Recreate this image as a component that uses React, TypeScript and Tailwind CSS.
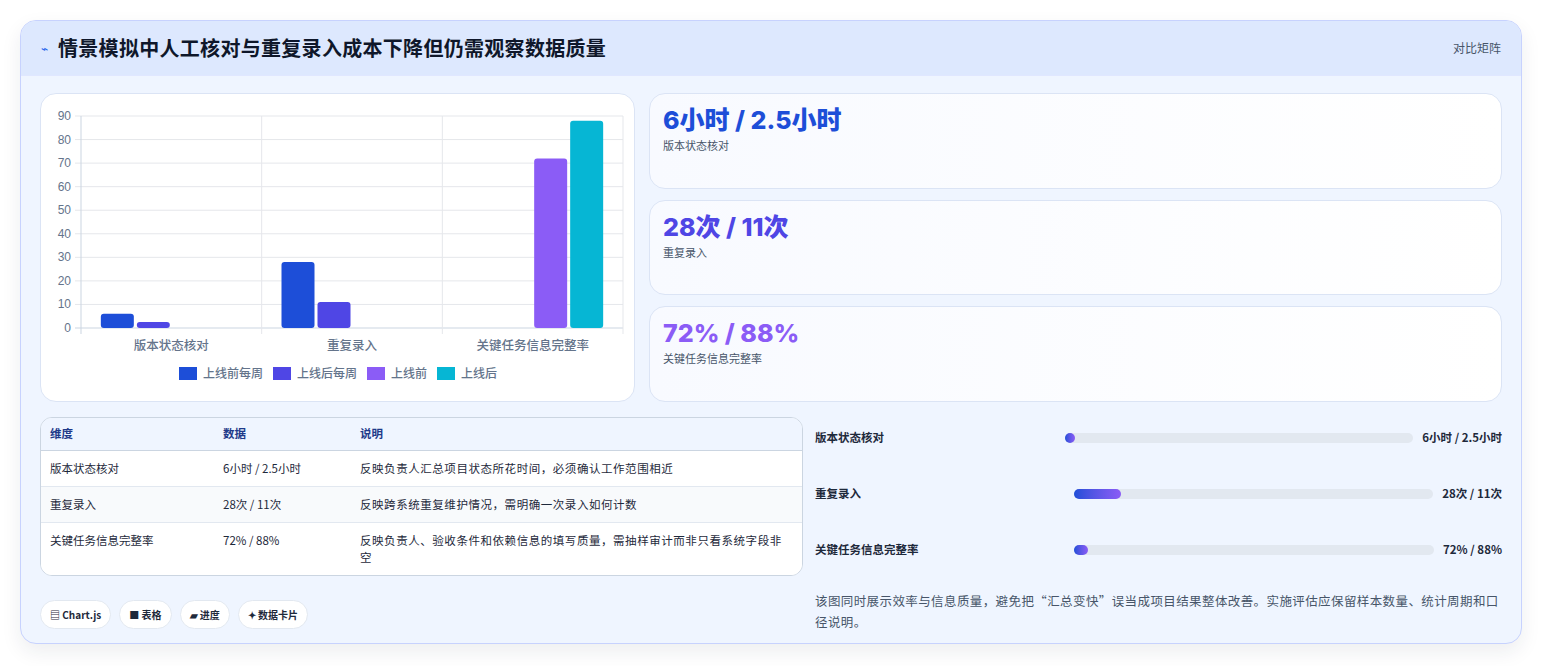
import React from "react";

const F = { fontFamily: '"Noto Sans CJK SC","Noto Sans",sans-serif' };

function Chart() {
  const x0 = 40, y0 = 22, y1 = 234, w = 542;
  const cw = w / 3;
  const ys = (v: number) => y1 - (v / 90) * (y1 - y0);
  const colors = ["#1d4ed8", "#4f46e5", "#8b5cf6", "#06b6d4"];
  const data = [[6, 2.5, null, null], [28, 11, null, null], [null, null, 72, 88]];
  const labels = ["版本状态核对", "重复录入", "关键任务信息完整率"];
  const legend = ["上线前每周", "上线后每周", "上线前", "上线后"];
  return (
    <svg width="594" height="308" style={F}>
      {Array.from({ length: 10 }).map((_, i) => (
        <g key={i}>
          <line x1={x0 - 6} x2={x0 + w} y1={ys(i * 10)} y2={ys(i * 10)} stroke={i === 0 ? "#cbd5e1" : "#e5e7eb"} />
          <text x={x0 - 10} y={ys(i * 10) + 4} textAnchor="end" fontSize="12" fill="#64748b" fontFamily="Liberation Sans, sans-serif">{i * 10}</text>
        </g>
      ))}
      {[0, 1, 2, 3].map((i) => (
        <line key={i} x1={x0 + i * cw} x2={x0 + i * cw} y1={y0} y2={y1 + 6} stroke={i === 0 ? "#cbd5e1" : "#e5e7eb"} />
      ))}
      {data.map((g, gi) =>
        g.map((v, bi) =>
          v == null ? null : (
            <rect key={gi + "-" + bi} x={x0 + gi * cw + (cw - 141) / 2 + bi * 36} y={ys(v)} width={33} height={y1 - ys(v)} rx={3} fill={colors[bi]} />
          )
        )
      )}
      {labels.map((l, i) => (
        <text key={l} x={x0 + i * cw + cw / 2} y={256} textAnchor="middle" fontSize="12.5" fontWeight="500" fill="#64748b">{l}</text>
      ))}
      {(() => {
        const widths = [94, 94, 70, 70];
        let cx = 138;
        return legend.map((l, i) => {
          const x = cx;
          cx += widths[i];
          return (
            <g key={l}>
              <rect x={x} y={273} width={18} height={13} fill={colors[i]} />
              <text x={x + 24} y={284} fontSize="12" fontWeight="500" fill="#64748b">{l}</text>
            </g>
          );
        });
      })()}
    </svg>
  );
}

function Stat({ v, l, c }: { v: string; l: string; c: string }) {
  return (
    <div className="flex-1 rounded-2xl border border-[#dbe4f5] bg-gradient-to-r from-[#f8faff] to-white px-[13px] pt-[10px]">
      <div className={`text-[25px] font-extrabold leading-[32px] ${c}`} style={{ fontFamily: '"Inter","Noto Sans CJK SC",sans-serif' }}>{v}</div>
      <div className="text-[11px] text-[#475569] mt-[1px]">{l}</div>
    </div>
  );
}

function Prog({ l, v, p, lw }: { l: string; v: string; p: number; lw: string }) {
  return (
    <div className="flex items-center h-[56px]">
      <div className={`text-[11.5px] font-semibold text-[#1e293b] ${lw}`}>{l}</div>
      <div className="flex-1 h-[10px] rounded-full bg-[#e2e8f0] mr-[9px]">
        <div className="h-full rounded-full bg-gradient-to-r from-[#1d4ed8] to-[#8b5cf6]" style={{ width: p + "%" }} />
      </div>
      <div className="text-[11.5px] font-bold text-[#1e293b] whitespace-nowrap">{v}</div>
    </div>
  );
}

export default function App() {
  const rows = [
    ["版本状态核对", "6小时 / 2.5小时", "反映负责人汇总项目状态所花时间，必须确认工作范围相近"],
    ["重复录入", "28次 / 11次", "反映跨系统重复维护情况，需明确一次录入如何计数"],
    ["关键任务信息完整率", "72% / 88%", "反映负责人、验收条件和依赖信息的填写质量，需抽样审计而非只看系统字段非空"],
  ];
  return (
    <div className="w-[1543px] h-[666px] bg-white pt-[20px] pl-[20px]" style={F}>
      <div className="w-[1502px] h-[624px] rounded-2xl border border-[#c7d2fe] bg-[#eff5ff] overflow-hidden shadow-[0_8px_20px_rgba(30,41,59,0.08)]">
        <div className="h-[55px] bg-[#dde8fe] flex items-center justify-between px-[20px] border-b border-[#e0e7ff]">
          <div className="flex items-center gap-[10px]">
            <span className="text-[12px] text-[#2563eb]">⌁</span>
            <span className="text-[20px] font-bold text-[#0f172a] tracking-[0.3px]">情景模拟中人工核对与重复录入成本下降但仍需观察数据质量</span>
          </div>
          <span className="text-[12px] text-[#475569]">对比矩阵</span>
        </div>
        <div className="px-[19px] pt-[17px]">
          <div className="flex gap-[14px] h-[309px]">
            <div className="w-[595px] rounded-2xl border border-[#dbe4f5] bg-white"><Chart /></div>
            <div className="flex-1 flex flex-col gap-[11px]">
              <Stat v="6小时 / 2.5小时" l="版本状态核对" c="text-[#1d4ed8]" />
              <Stat v="28次 / 11次" l="重复录入" c="text-[#4f46e5]" />
              <Stat v="72% / 88%" l="关键任务信息完整率" c="text-[#8b5cf6]" />
            </div>
          </div>
          <div className="flex gap-[12px] mt-[15px]">
            <div className="w-[763px]">
              <div className="rounded-xl border border-[#cbd5e1] bg-white overflow-hidden text-[11.5px]">
                <div className="flex h-[33px] items-center bg-[#eff5ff] border-b border-[#cbd5e1] font-semibold text-[#1e3a8a]">
                  <div className="w-[182px] pl-[9px]">维度</div><div className="w-[137px]">数据</div><div>说明</div>
                </div>
                {rows.map((r, i) => (
                  <div key={i} className={`flex py-[9px] leading-[17px] text-[#1e293b] ${i === 1 ? "bg-[#f8fafc]" : "bg-white"} ${i < 2 ? "border-b border-[#e2e8f0]" : ""}`}>
                    <div className="w-[182px] pl-[9px] shrink-0">{r[0]}</div>
                    <div className="w-[137px] shrink-0">{r[1]}</div>
                    <div className="w-[430px] tracking-[0.55px]">{r[2]}</div>
                  </div>
                ))}
              </div>
              <div className="flex gap-[8px] mt-[24px] text-[10px] font-semibold text-[#1e293b]">
                {["▤ Chart.js", "■ 表格", "▰ 进度", "✦ 数据卡片"].map((t) => (
                  <span key={t} className="rounded-full border border-[#e2e8f0] bg-white px-[9px] py-[6px]">{t}</span>
                ))}
              </div>
            </div>
            <div className="flex-1 -mt-[7px]">
              <Prog l="版本状态核对" v="6小时 / 2.5小时" p={3} lw="w-[250px]" />
              <Prog l="重复录入" v="28次 / 11次" p={13} lw="w-[259px]" />
              <Prog l="关键任务信息完整率" v="72% / 88%" p={4} lw="w-[259px]" />
              <div className="mt-[12px] text-[12.5px] leading-[21px] text-[#475569] tracking-[0.4px]">该图同时展示效率与信息质量，避免把“汇总变快”误当成项目结果整体改善。实施评估应保留样本数量、统计周期和口径说明。</div>
            </div>
          </div>
        </div>
      </div>
    </div>
  );
}
